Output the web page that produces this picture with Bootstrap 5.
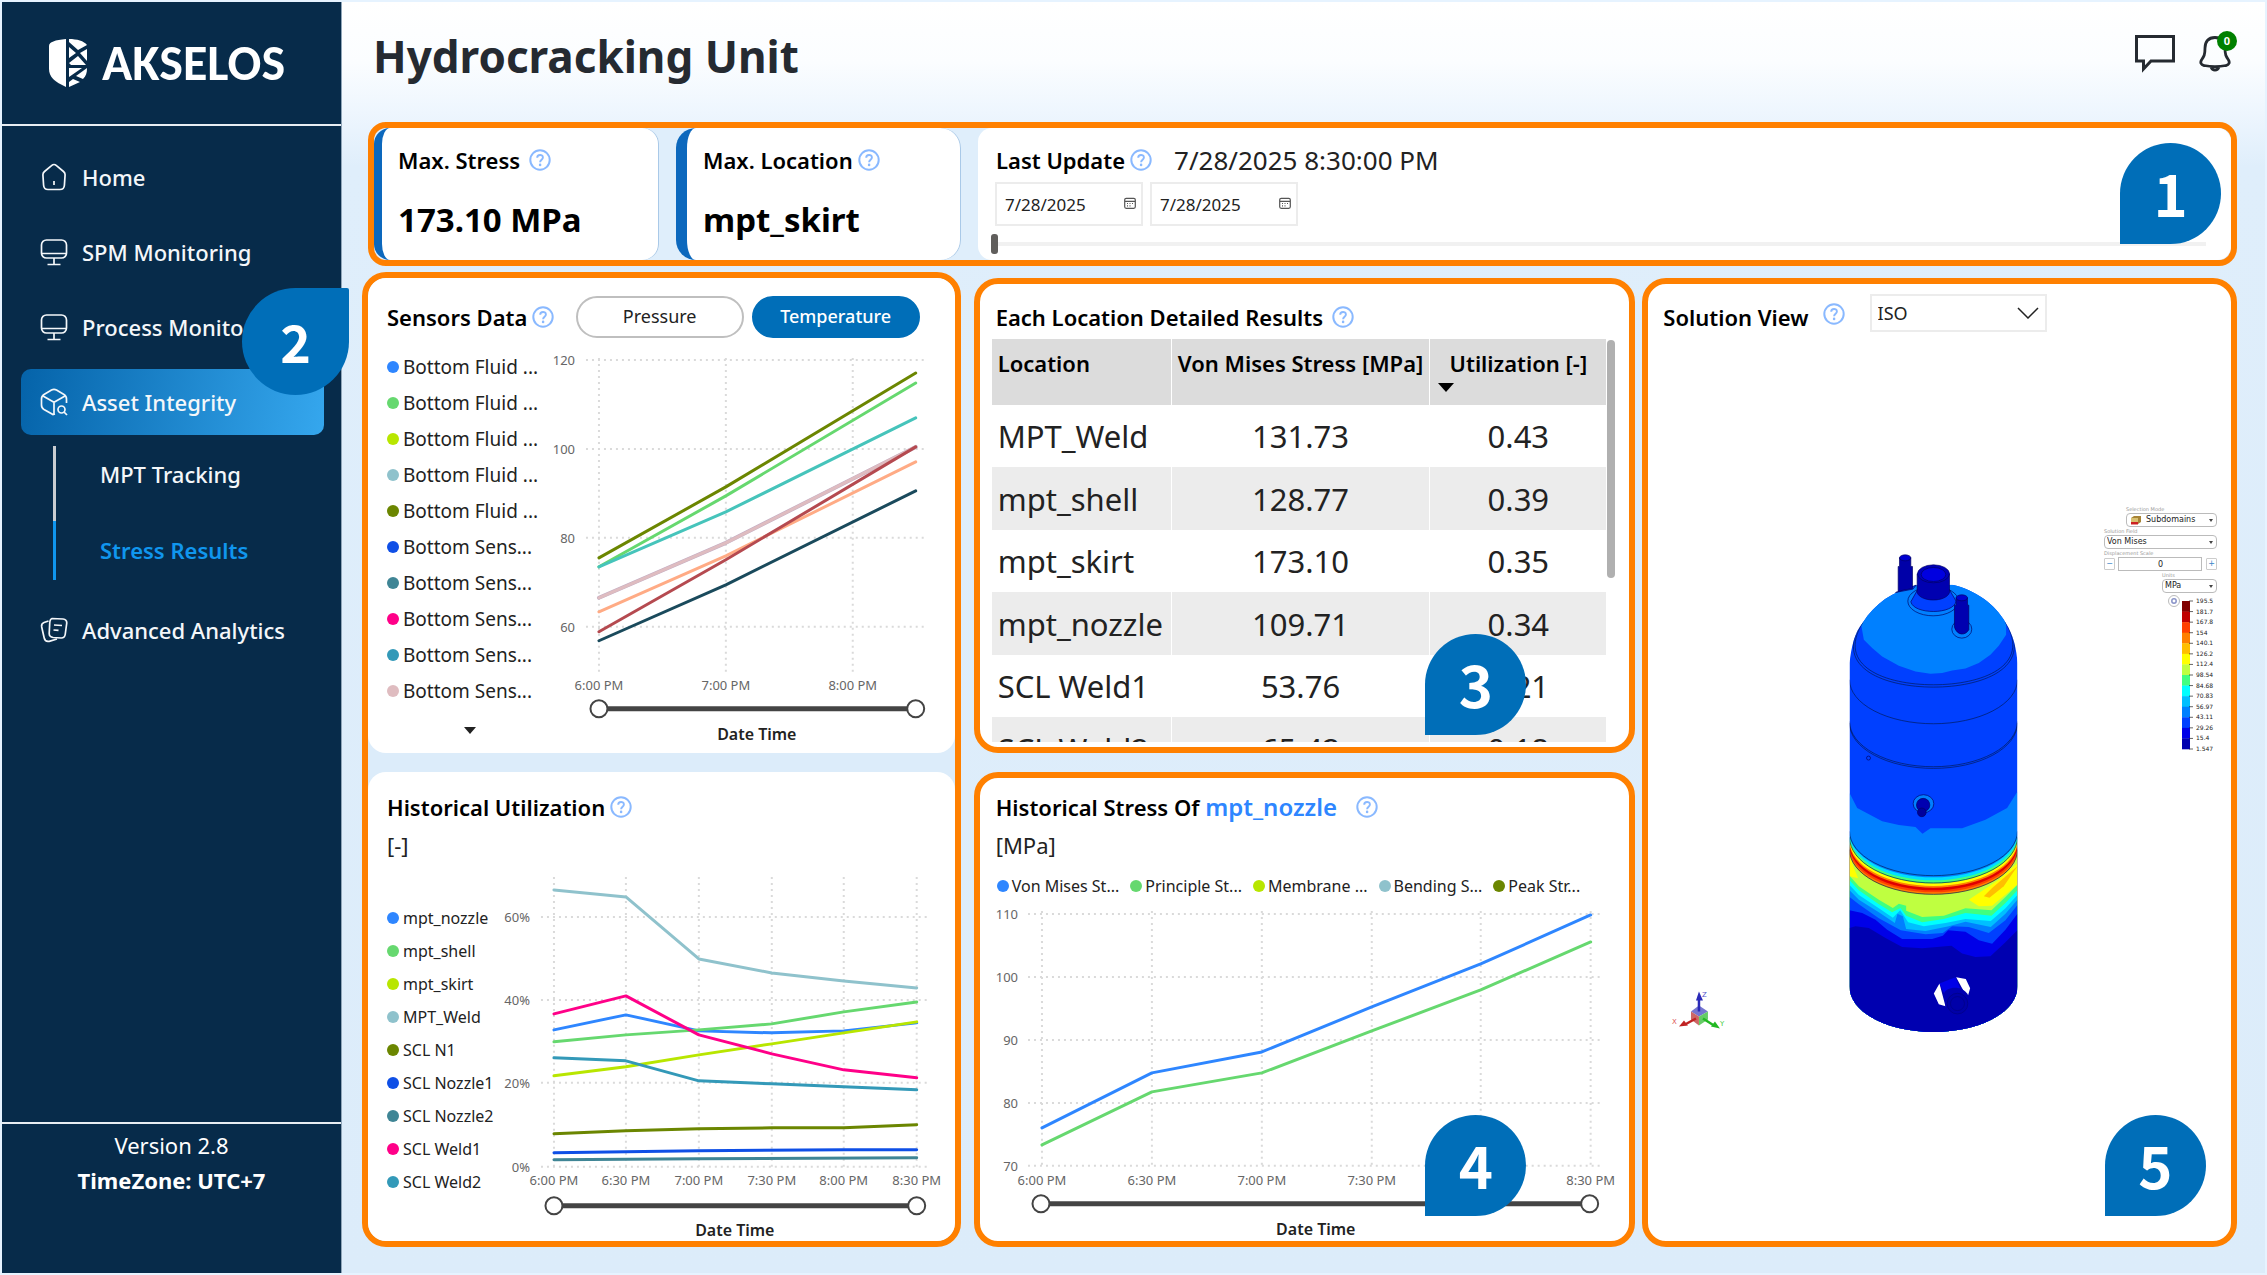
<!DOCTYPE html>
<html lang="en">
<head>
<meta charset="utf-8">
<meta name="viewport" content="width=device-width, initial-scale=1">
<title>Hydrocracking Unit - Stress Results</title>
<link href="https://cdn.jsdelivr.net/npm/bootstrap@5.3.0/dist/css/bootstrap.min.css" rel="stylesheet">
<style>
:root{--navy:#072b4a;--accent:#006eb8;--mark-orange:#ff8000;--sky:#2e86ff}
body{font-family:"Noto Sans",sans-serif;font-size:22px;line-height:30px;color:#222;background:#e6f3ff}
.app{padding:2px}
.side{width:340px;background:var(--navy);border-right:1px solid #8fa5b8}
.brand{height:122px;padding-left:47px;gap:15px;color:#fff;text-decoration:none}
.brand span{font:700 50px/50px Carlito,Lato,sans-serif}
.rule{height:2px;background:#e8edf2}
.menu{padding:18px 17px 0 19px;gap:9px}
.menu-link{height:66px;padding-left:19px;gap:14px;color:#f4f7fa;text-decoration:none;font-weight:500;border-radius:10px}
.menu-link svg,.head-icon{fill:none;stroke:currentColor}
.menu-link.current{background:linear-gradient(100deg,#0563a9,#35a7ee)}
.submenu{margin:2px 0 8px 32px}
.submenu a{display:block;height:59px;line-height:59px;padding-left:44px;border-left:3px solid #1096ee;color:#1096ee;font-weight:600;text-decoration:none}
.submenu a.plain{height:75px;line-height:56px;border-color:#c9cdd1;color:#f4f7fa;font-weight:500}
.side-foot{height:149px;padding-top:4px;line-height:35px;color:#fff}
.main{min-width:0;padding:0 28px 26px 20px;background:linear-gradient(#fff 0,#fbfdff 60px,#eef6fe 110px,#dfeefb 165px,#dcecfa 100%)}
.page-head{height:120px;padding:0 6px 12px 11px;color:#252a31}
.page-head h1{font-size:44px;line-height:56px;font-weight:700}
.head-btn{border:0;background:none;padding:0 0 4px;line-height:0;color:#252a31;position:relative}
.count-dot{position:absolute;top:-4px;right:-6px;width:20px;height:20px;border-radius:10px;background:#008000;color:#fff;font:700 11px/20px "Noto Sans",sans-serif;text-align:center}
.zone{position:relative;border:6px solid var(--mark-orange);border-radius:24px;background:#fff;min-width:0;min-height:0}
.zone-top{margin-left:6px;border-radius:18px;background:#dfeefb;gap:17px}
.kpi{width:285px;padding:17px 0 18px 16px;background:#fff;border:0 solid #0c68bd;border-left-width:8px;border-radius:16px;box-shadow:inset -1px 0 #a9c9e8;color:#000}
.kpi.wide-edge{border-left-width:11px;border-radius:20px}
.kpi-value{font-size:33px;line-height:44px;font-weight:700;margin-top:23px}
.update{min-width:0;padding:17px 0 6px 18px;background:#fff;border-radius:14px}
.ttl{font-size:22px;line-height:30px;font-weight:600;color:#000;margin:0;white-space:nowrap}
.stamp{font-size:26px;margin-left:21px}
.help{width:24px;height:24px;flex:none;color:#8ab9ff}
.dates{margin-top:7px}
.date-box{position:relative;width:148px;height:44px;margin-left:-1px;margin-right:8px}
.date-box input{width:100%;height:100%;border:2px solid #ececec;padding:0 0 0 8px;font-size:17px;color:#222}
.date-box svg{position:absolute;right:7px;top:15px}
.date-range{display:block;appearance:none;width:calc(100% - 20px);height:20px;margin:8px 0 0 -5px;background:linear-gradient(#f1f1f1,#f1f1f1) 7px 8px/100% 4px no-repeat}
.date-range::-webkit-slider-thumb{appearance:none;width:7px;height:20px;border-radius:3px;background:#605e5c}
.lower{display:grid;grid-template-columns:minmax(0,599fr) minmax(0,1264fr);column-gap:13px;min-height:0;padding-top:6px}
.col-a{overflow:hidden;background:#dcecfa;gap:19px}
.rest{display:grid;grid-template-columns:minmax(0,662fr) minmax(0,595fr);column-gap:7px;padding-top:6px;min-width:0}
.col-b{display:grid;grid-template-rows:1fr 1fr;row-gap:19px;min-width:0}
.pane{background:#fff;border-radius:18px}
.pane-sensor{flex:475 1 0}
.pane-util{flex:469 1 0;padding-top:20px}
.sensor-head{padding:18px 35px 0 19px}
.toggle{width:168px;height:42px;border-radius:21px;border:2px solid #bfbfbf;background:#fff;color:#222;font-size:18px;line-height:34px;padding:0 0 2px}
.toggle.on{background:var(--accent);border-color:var(--accent);color:#fff;font-weight:500}
.keys{list-style:none;margin:0;padding:0 0 0 19px;white-space:nowrap;flex:none}
.keys li{display:flex;align-items:center;gap:4px}
.keys i,.key-row i{width:12px;height:12px;border-radius:6px;flex:none}
.keys-sensor{width:177px;padding-top:11px;font-size:19px}
.keys-sensor li{height:36px}
.keys-util{width:132px;padding-top:42px;font-size:16px}
.keys-util li{height:33px}
.more{display:block;border:0;background:none;height:42px;width:150px;margin-left:27px;padding:0;line-height:0}
.key-row{font-size:16px;line-height:24px;padding-left:17px;margin-top:14px;gap:11px}
.key-row span{display:flex;align-items:center;gap:3px;white-space:nowrap}
.unit{padding-left:19px}
.results-head{padding:18px 0 0 16px}
.stress-head{padding:14px 0 0 16px;gap:18px}
.stress-name{font-size:24px;color:var(--sky)}
.view-head{padding:10px 0 0 15px;gap:13px}
.chart{display:block;min-width:0;width:100%;height:auto;font-size:13px;fill:#666}
.chart text{dominant-baseline:central}
.chart .end{text-anchor:end}
.chart .mid{text-anchor:middle}
.chart .axis-name{font-size:16px;font-weight:600;fill:#222;text-anchor:middle}
.chart .grid{stroke:#dadada;stroke-width:2;stroke-dasharray:2 4;fill:none}
.chart .series{fill:none;stroke-width:3;stroke-linejoin:round;stroke-linecap:round}
.chart .track{stroke:#444;stroke-width:5}
.chart .knob{fill:#fff;stroke:#444;stroke-width:2}
.results-wrap{min-height:0;margin:7px 14px 5px 12px;gap:1px}
.results-clip{overflow:hidden;flex:1 1 0;height:0;min-height:100%}
.results{width:100%;table-layout:fixed;border-collapse:collapse;color:#222;font-size:31px}
.results th{height:66px;background:#dcdcdc;color:#000;font-size:22px;line-height:28px;font-weight:600;text-align:center;vertical-align:top;padding:10px 0 0;white-space:nowrap;position:relative}
.results th:first-child,.results td:first-child{text-align:left;padding-left:6px}
.results td{height:62px;text-align:center;padding:0;line-height:40px;white-space:nowrap}
.results tbody tr:nth-child(even) td{background:#ececec;height:63px}
.results th+th,.results td+td{border-left:1px solid #fff}
.sort{position:absolute;left:7px;bottom:13px}
.scroll-thumb{width:8px;height:238px;margin-top:1px;border-radius:4px;background:#b0b0b0}
.pin{position:absolute;z-index:3;width:101px;height:101px;border-radius:51px 51px 51px 0;background:var(--accent);color:#fff;font:700 58px/98px "Noto Sans CJK SC",sans-serif;text-align:center}
.pin-1{right:10px;top:15px}
.pin-2{right:-8px;top:286px;width:107px;height:107px;border-radius:54px 2px 54px 54px;font-size:52px;line-height:105px}
.pin-3{right:103px;bottom:12px}
.pin-4{right:103px;bottom:25px}
.pin-5{right:25px;bottom:25px}
.view-select{width:177px;height:38px;margin-left:11px;border:2px solid #ececec;border-radius:0;padding:0 8px 0 6px;font-size:18px;line-height:24px;color:#222;background:#fff url("data:image/svg+xml,%3Csvg xmlns='http://www.w3.org/2000/svg' viewBox='0 0 22 12'%3E%3Cpath d='M1 1l10 10L21 1' fill='none' stroke='%23222' stroke-width='1.5'/%3E%3C/svg%3E") right 6px center/22px 12px no-repeat;appearance:none}
.viewer-panel{width:118px;flex:none;padding-top:173px;margin-right:14px;font:8px/8px "DejaVu Sans",sans-serif}
.viewer-panel label{display:block;font-size:5px;line-height:8px;color:#999}
.viewer-panel select,.viewer-panel input,.viewer-panel button{font:8px/10px "DejaVu Sans",sans-serif;color:#222;height:14px;border:1px solid #bbb;border-radius:4px;padding:0 2px;background-color:#fff}
.viewer-panel select{display:block;appearance:none;background:#fff url("data:image/svg+xml,%3Csvg xmlns='http://www.w3.org/2000/svg' viewBox='0 0 4 3'%3E%3Cpath d='M0 0h4L2 3z' fill='%23444'/%3E%3C/svg%3E") right 3px center/4px 3px no-repeat}
.viewer-panel input{border-radius:0;text-align:center;width:84px}
.viewer-panel button{width:11px;height:12px;border-radius:1px;border-color:#ccc;color:#3a86c8;padding:0}
.w-mode{width:91px}.w-units{width:55px}
.w-mode select{padding-left:19px}
.vp-row{width:113px}
</style>
</head>
<body>
<svg width="0" height="0" class="position-absolute" aria-hidden="true">
  <symbol id="help" viewBox="0 0 24 24"><circle cx="12" cy="12" r="9.7" fill="none" stroke="currentColor" stroke-width="2"/><path d="M9.2 9.7c0-3.600 5.700-3.500 5.700-.3 0 2.300-2.800 2.300-2.800 4.900" fill="none" stroke="currentColor" stroke-width="1.900"/><circle cx="12.100" cy="16.900" r="1.300" fill="currentColor"/></symbol>
  <symbol id="cal" viewBox="0 0 12 12"><rect x=".7" y="1.300" width="10.600" height="10" rx="1.500" fill="none" stroke="#555" stroke-width="1.200"/><path d="M1 4.300h10M3 6.500h1M5.500 6.500h1M8 6.500h1M3 8.800h1M5.500 8.800h1" stroke="#555" stroke-width="1.200"/></symbol>
  <symbol id="screen" viewBox="0 0 28 28"><rect x="1.500" y="2" width="25" height="18" rx="5"/><path d="M1.500 15.500h25M14 20v6M7.500 26.500h13"/></symbol>
</svg>

<div class="app d-flex min-vh-100">
  <aside class="side position-relative d-flex flex-column flex-shrink-0">
    <a href="#" class="brand d-flex align-items-center" aria-label="Akselos">
      <svg width="38" height="48" viewBox="0 0 38 48" aria-hidden="true">
        <path fill="#fff" d="M17 0v48C6 43 0 38 0 30V7C0 3 6 1 17 0z"/>
        <path fill="#fff" d="M20 0c8 0 15 2 18 6L29 11 20 3zM20 8l7 6-7 5zM38 10v12L31 14zM29 17l8 9-15 0-2-2zM20 29h13L20 38zM38 29c0 5-1 8-4 11L27 37zM24 40l7 3-11 5v-5z"/>
      </svg>
      <span>AKSELOS</span>
    </a>
    <div class="rule"></div>
    <nav class="menu d-flex flex-column">
      <a href="#" class="menu-link d-flex align-items-center"><svg width="28" height="28" viewBox="0 0 28 28" stroke-width="1.700"><path d="M14 1.500c1 0 1.700.5 2.500 1.200l7 5.800c1 .8 1.600 2 1.600 3.200l-.7 10.500c-.2 2.800-1.800 4.300-4.400 4.300H8c-2.600 0-4.200-1.500-4.400-4.300L2.900 11.700c0-1.200.6-2.400 1.600-3.200l7-5.800c.8-.7 1.500-1.200 2.500-1.200zM14 18v4"/></svg>Home</a>
      <a href="#" class="menu-link d-flex align-items-center"><svg width="28" height="28" stroke-width="1.700"><use href="#screen"/></svg>SPM Monitoring</a>
      <a href="#" class="menu-link d-flex align-items-center"><svg width="28" height="28" stroke-width="1.700"><use href="#screen"/></svg>Process Monitoring</a>
      <a href="#" class="menu-link current d-flex align-items-center"><svg width="28" height="28" viewBox="0 0 28 28" stroke-width="1.700"><path d="M15 26l-2 .5L4 21.500C2 20.300 1.500 19 1.500 17v-6c0-2 .5-3.300 2.500-4.500L11.500 2c1.700-.8 3.300-.8 5 0L24 6.500c2 1.200 2.500 2.500 2.500 4.500v4M3 8l11 6.300L25 8M14 14.300V26"/><circle cx="21.500" cy="21.500" r="3.500"/><path d="M24 24l3 3"/></svg>Asset Integrity</a>
      <div class="submenu"><a href="#" class="plain">MPT Tracking</a><a href="#">Stress Results</a></div>
      <a href="#" class="menu-link d-flex align-items-center"><svg width="28" height="28" viewBox="0 0 28 28" stroke-width="1.700"><path d="M12 2.500l11 .5c2.500.3 4 2 3.700 4.500l-1.500 11c-.3 2-1.800 3.500-4 3.500l-8-.5c-2.500-.3-4-1.800-4-4l.5-10c.1-2.800.6-4.500 2.300-5z"/><path d="M8.500 5L4 6.500c-2 .8-2.800 2-2.300 4.500l2.500 11c.6 2.600 2.400 3.800 5 3.300L17 23M14 9l8 .5M13.500 14l5 .4"/></svg>Advanced Analytics</a>
    </nav>
    <div class="mt-auto rule"></div>
    <div class="side-foot text-center"><div>Version 2.8</div><div class="fw-bold">TimeZone: UTC+7</div></div>
    <span class="pin pin-2">2</span>
  </aside>

  <main class="main flex-fill d-flex flex-column">
    <header class="page-head d-flex align-items-center">
      <h1 class="m-0 me-auto">Hydrocracking Unit</h1>
      <button class="head-btn me-4" aria-label="Comments"><svg class="head-icon" width="40" height="38" viewBox="0 0 40 38" stroke-width="3"><path d="M1.500 1.500h37V26H16l-7.500 8v-8h-7z"/></svg></button>
      <button class="head-btn" aria-label="Notifications"><svg class="head-icon" width="32" height="38" viewBox="0 0 32 38" stroke-width="2.800"><path d="M16 2.500C9 2.500 6 7 6 13c0 7-1 8.500-3.500 12C1 27.500 2 30 5 30.500c7 1.400 15 1.400 22 0 3-.5 4-3 2.500-5.500C27 21.500 26 20 26 13c0-6-3-10.500-10-10.500zM12 32c1.500 4 6.500 4 8 0"/></svg><span class="count-dot">0</span></button>
    </header>

    <section class="zone zone-top d-flex">
      <div class="kpi flex-shrink-0"><h2 class="ttl d-flex align-items-center gap-1">Max. Stress <svg class="help ms-1"><use href="#help"/></svg></h2><div class="kpi-value">173.10 MPa</div></div>
      <div class="kpi wide-edge flex-shrink-0"><h2 class="ttl d-flex align-items-center gap-1">Max. Location <svg class="help"><use href="#help"/></svg></h2><div class="kpi-value">mpt_skirt</div></div>
      <div class="update flex-fill">
        <div class="d-flex align-items-center"><h2 class="ttl">Last Update</h2><svg class="help ms-1"><use href="#help"/></svg><span class="stamp">7/28/2025 8:30:00 PM</span></div>
        <div class="dates d-flex">
          <div class="date-box"><input type="text" value="7/28/2025" aria-label="Start date"><svg width="12" height="12"><use href="#cal"/></svg></div>
          <div class="date-box"><input type="text" value="7/28/2025" aria-label="End date"><svg width="12" height="12"><use href="#cal"/></svg></div>
        </div>
        <input class="date-range" type="range" min="0" max="100" value="0" aria-label="Date range">
      </div>
      <span class="pin pin-1">1</span>
    </section>

    <div class="lower flex-fill">
      <section class="zone col-a d-flex flex-column">
        <div class="pane pane-sensor d-flex flex-column">
          <div class="sensor-head d-flex align-items-center">
            <h2 class="ttl">Sensors Data</h2><svg class="help ms-1 me-auto"><use href="#help"/></svg>
            <button class="toggle">Pressure</button><button class="toggle on ms-2">Temperature</button>
          </div>
          <div class="d-flex">
            <div class="flex-shrink-0">
              <ul class="keys keys-sensor">
                <li><i style="background:#2e86ff"></i>Bottom Fluid ...</li><li><i style="background:#66d86f"></i>Bottom Fluid ...</li><li><i style="background:#b8e600"></i>Bottom Fluid ...</li><li><i style="background:#8fc2cc"></i>Bottom Fluid ...</li><li><i style="background:#6b8600"></i>Bottom Fluid ...</li><li><i style="background:#0f4fe6"></i>Bottom Sens...</li><li><i style="background:#3f8595"></i>Bottom Sens...</li><li><i style="background:#ff0088"></i>Bottom Sens...</li><li><i style="background:#3399b8"></i>Bottom Sens...</li><li><i style="background:#dfbcc0"></i>Bottom Sens...</li>
              </ul>
              <button class="more" aria-label="More sensors"><svg width="12" height="7"><path d="M0 0h12L6 7z" fill="#222"/></svg></button>
            </div>
            <svg class="chart" viewBox="545 338 410 415" role="img" aria-label="Sensor temperature by time">
              <path class="grid" d="M586 360H926M586 449H926M586 538H926M586 627H926M599 358V672M726 358V672M853 358V672"/>
              <g class="end"><text x="575" y="360">120</text><text x="575" y="449">100</text><text x="575" y="538">80</text><text x="575" y="627">60</text></g>
              <g class="mid"><text x="599" y="685">6:00 PM</text><text x="726" y="685">7:00 PM</text><text x="853" y="685">8:00 PM</text></g>
              <g class="series"><path stroke="#66d86f" d="M599 567L726 496 916 383"/><path stroke="#6b8600" d="M599 558L726 487 916 373"/><path stroke="#46c4bb" d="M599 567L726 512 916 418"/><path stroke="#c3aec4" stroke-width="4" d="M599 598L726 543 916 447"/><path stroke="#dfbcc0" d="M599 598L726 543 916 447"/><path stroke="#ffab85" d="M599 612L726 556 916 462"/><path stroke="#b54a50" d="M599 632L726 560 916 447"/><path stroke="#1a4a5c" d="M599 641L726 585 916 491"/></g>
              <path class="track" d="M599 709H916"/><circle class="knob" cx="599" cy="709" r="8.500"/><circle class="knob" cx="916" cy="709" r="8.500"/>
              <text class="axis-name" x="757" y="734">Date Time</text>
            </svg>
          </div>
        </div>
        <div class="pane pane-util d-flex flex-column">
          <div class="d-flex align-items-center unit"><h2 class="ttl">Historical Utilization</h2><svg class="help ms-1"><use href="#help"/></svg></div>
          <div class="unit mt-2">[-]</div>
          <div class="d-flex">
            <ul class="keys keys-util">
              <li><i style="background:#2e86ff"></i>mpt_nozzle</li><li><i style="background:#66d86f"></i>mpt_shell</li><li><i style="background:#b8e600"></i>mpt_skirt</li><li><i style="background:#8fc2cc"></i>MPT_Weld</li><li><i style="background:#6b8600"></i>SCL N1</li><li><i style="background:#0f4fe6"></i>SCL Nozzle1</li><li><i style="background:#3f8595"></i>SCL Nozzle2</li><li><i style="background:#ff0088"></i>SCL Weld1</li><li><i style="background:#3399b8"></i>SCL Weld2</li>
            </ul>
            <svg class="chart" viewBox="500 860 455 381" role="img" aria-label="Utilization by time">
              <path class="grid" d="M541 917H927M541 1000H927M541 1083H927M541 1167H927M554 877V1167M626 877V1167M699 877V1167M772 877V1167M844 877V1167M917 877V1167"/>
              <g class="end"><text x="530" y="917">60%</text><text x="530" y="1000">40%</text><text x="530" y="1083">20%</text><text x="530" y="1167">0%</text></g>
              <g class="mid"><text x="554" y="1180">6:00 PM</text><text x="626" y="1180">6:30 PM</text><text x="699" y="1180">7:00 PM</text><text x="772" y="1180">7:30 PM</text><text x="844" y="1180">8:00 PM</text><text x="917" y="1180">8:30 PM</text></g>
              <g class="series"><path stroke="#2e86ff" d="M554 1030L626 1015 699 1031 772 1033 844 1031 917 1023"/><path stroke="#66d86f" d="M554 1042L626 1035 699 1030 772 1024 844 1012 917 1002"/><path stroke="#b8e600" d="M554 1076L626 1067 699 1055 772 1044 844 1033 917 1022"/><path stroke="#8fc2cc" d="M554 890L626 897 699 959 772 973 844 981 917 988"/><path stroke="#6b8600" d="M554 1134L626 1131 699 1129 772 1128 844 1128 917 1125"/><path stroke="#0f4fe6" d="M554 1153L626 1152 699 1151 844 1150 917 1150"/><path stroke="#3f8595" d="M554 1160L699 1159 917 1158"/><path stroke="#ff0088" d="M554 1014L626 996 699 1035 772 1054 844 1070 917 1078"/><path stroke="#3399b8" d="M554 1058L626 1061 699 1081 772 1084 844 1087 917 1090"/></g>
              <path class="track" d="M554 1206H917"/><circle class="knob" cx="554" cy="1206" r="8.500"/><circle class="knob" cx="917" cy="1206" r="8.500"/>
              <text class="axis-name" x="735" y="1230">Date Time</text>
            </svg>
          </div>
        </div>
      </section>

      <div class="rest">
        <div class="col-b">
          <section class="zone d-flex flex-column">
            <div class="d-flex align-items-center results-head"><h2 class="ttl">Each Location Detailed Results</h2><svg class="help ms-2"><use href="#help"/></svg></div>
            <div class="results-wrap d-flex flex-fill">
              <div class="results-clip">
                <table class="results">
                  <colgroup><col style="width:29.200%"><col style="width:42.100%"><col></colgroup>
                  <thead><tr><th scope="col">Location</th><th scope="col">Von Mises Stress [MPa]</th><th scope="col">Utilization [-]<svg class="sort" width="18" height="9"><path d="M1 0h16L9 9z"/></svg></th></tr></thead>
                  <tbody><tr><td>MPT_Weld</td><td>131.73</td><td>0.43</td></tr><tr><td>mpt_shell</td><td>128.77</td><td>0.39</td></tr><tr><td>mpt_skirt</td><td>173.10</td><td>0.35</td></tr><tr><td>mpt_nozzle</td><td>109.71</td><td>0.34</td></tr><tr><td>SCL Weld1</td><td>53.76</td><td>0.21</td></tr><tr><td>SCL Weld2</td><td>65.42</td><td>0.18</td></tr></tbody>
                </table>
              </div>
              <div class="scroll-thumb"></div>
            </div>
            <span class="pin pin-3">3</span>
          </section>
          <section class="zone d-flex flex-column">
            <div class="d-flex align-items-center stress-head"><h2 class="ttl">Historical Stress Of <span class="stress-name">mpt_nozzle</span></h2><svg class="help"><use href="#help"/></svg></div>
            <div class="ps-3 mt-2">[MPa]</div>
            <div class="key-row d-flex"><span><i style="background:#2e86ff"></i>Von Mises St...</span><span><i style="background:#66d86f"></i>Principle St...</span><span><i style="background:#b8e600"></i>Membrane ...</span><span><i style="background:#8fc2cc"></i>Bending S...</span><span><i style="background:#6b8600"></i>Peak Str...</span></div>
            <svg class="chart" viewBox="980 899 650 342" role="img" aria-label="Stress of mpt_nozzle by time">
              <path class="grid" d="M1028 915H1600M1028 978H1600M1028 1041H1600M1028 1104H1600M1028 1167H1600M1042 912V1167M1152 912V1167M1262 912V1167M1372 912V1167M1481 912V1167M1591 912V1167"/>
              <g class="end"><text x="1018" y="915">110</text><text x="1018" y="978">100</text><text x="1018" y="1041">90</text><text x="1018" y="1104">80</text><text x="1018" y="1167">70</text></g>
              <g class="mid"><text x="1042" y="1181">6:00 PM</text><text x="1152" y="1181">6:30 PM</text><text x="1262" y="1181">7:00 PM</text><text x="1372" y="1181">7:30 PM</text><text x="1591" y="1181">8:30 PM</text></g>
              <g class="series"><path stroke="#2e86ff" d="M1042 1129L1152 1074 1262 1053 1372 1008 1481 965 1591 916"/><path stroke="#66d86f" d="M1042 1146L1152 1093 1262 1074 1372 1032 1481 991 1591 943"/></g>
              <path class="track" d="M1041 1205H1590"/><circle class="knob" cx="1041" cy="1205" r="8.500"/><circle class="knob" cx="1590" cy="1205" r="8.500"/>
              <text class="axis-name" x="1316" y="1230">Date Time</text>
            </svg>
            <span class="pin pin-4">4</span>
          </section>
        </div>

        <section class="zone d-flex flex-column">
          <div class="d-flex align-items-start view-head"><label class="ttl mt-2" for="view">Solution View</label><svg class="help mt-2"><use href="#help"/></svg><select id="view" class="view-select"><option>ISO</option></select></div>
          <div class="d-flex flex-fill align-items-start">
            <svg class="chart" viewBox="1649 332 451 909" role="img" aria-label="Vessel stress contour">
              <defs><clipPath id="shell"><path d="M92 370C98 320 106 280 132 248C170 190 220 156 290 137L400 135C470 150 530 195 560 248C584 285 594 330 596 370V1340C596 1420 480 1477 344 1477S92 1420 92 1340z"/></clipPath></defs>
              <g transform="translate(1820 540) scale(.3334)">
                <g clip-path="url(#shell)">
                  <rect x="90" y="120" width="508" height="1360" fill="#0040ff"/>
                  <path fill="#0080ff" d="M200 100L127 255 135 300 160 325 190 350 240 378 290 395 335 402 370 400 400 392 440 386 480 370 515 345 540 318 562 285V240L440 100z"/>
                  <path fill="#0080ff" d="M92 760L115 805 190 845 240 856 290 862 311 882 335 866 430 866 500 840 565 805 596 755V1480H92z"/>
                  <path fill="#00dfff" d="M92 878A252 135 0 0 0 596 878V1480H92z"/>
                  <path fill="#40ff80" d="M92 885A252 137 0 0 0 596 885V1480H92z"/>
                  <path fill="#ffff00" d="M92 892A252 139 0 0 0 596 892V1480H92z"/>
                  <path fill="#ff8000" d="M92 902A252 137 0 0 0 596 902V1480H92z"/>
                  <path fill="#e00000" d="M92 908A252 136 0 0 0 596 908V1480H92z"/>
                  <path fill="#ff4000" d="M92 916A252 136 0 0 0 596 916V1480H92z"/>
                  <path fill="#ff8000" d="M92 924A252 134 0 0 0 596 924V1480H92z"/>
                  <path fill="#bfff40" d="M92 932A252 132 0 0 0 596 932V1480H92z"/>
                  <path fill="#ffff00" d="M92 945L105 985 118 1016 92 1010zM450 1080L540 1020 596 970V1035L520 1098 480 1100z"/>
                  <path fill="#ffbf00" d="M495 1070L520 1045 596 980 555 1040 512 1074z"/>
                  <path fill="#40ff80" d="M92 1008L120 1040 180 1080 222 1105 240 1092 262 1098 262 1113 310 1132 375 1128 440 1106 518 1112 560 1072 596 1035V1480H92z"/>
                  <path fill="#00ffff" d="M92 1022L120 1052 180 1094 220 1118 245 1105 262 1128 310 1148 375 1138 440 1120 518 1128 560 1090 596 1052V1480H92z"/>
                  <path fill="#00bfff" d="M92 1036L120 1066 180 1106 222 1134 244 1112 268 1148 315 1160 380 1150 440 1138 516 1144 560 1106 596 1066V1480H92z"/>
                  <path fill="#0080ff" d="M92 1052L120 1080 180 1118 228 1150 236 1122 252 1130 262 1168 320 1174 390 1160 440 1146 516 1162 560 1122 596 1080V1480H92z"/>
                  <path fill="#0040ff" d="M92 1072L120 1094 180 1136 246 1172 320 1184 372 1180 400 1160 450 1162 510 1180 560 1142 596 1096V1480H92z"/>
                  <path fill="#0000e8" d="M92 1112L130 1120 170 1140 205 1170 250 1198 340 1198 372 1188 388 1172 440 1176 480 1202 520 1212 560 1170 596 1122V1480H92z"/>
                  <path fill="#0000b0" d="M92 1165L110 1160 150 1165 200 1195 250 1222 310 1226 398 1218 430 1242 470 1252 515 1250 560 1208 596 1172V1480H92z"/>
                  <g fill="none" stroke="#001a55" stroke-width="2"><path d="M92 420A252 132 0 0 0 596 420M92 545A252 136 0 0 0 596 545M92 550A252 136 0 0 0 596 550M92 875A252 133 0 0 0 596 875M92 893A252 137 0 0 0 596 893M92 930A252 134 0 0 0 596 930M132 248C50 380 200 435 344 435S640 380 560 248M126 252C45 386 200 442 344 442S644 386 566 252"/></g>
                </g>
                <g stroke="#000060" stroke-width="2">
                  <ellipse cx="343" cy="184" rx="76" ry="44" fill="#0080ff"/><path d="M296 150L276 186C285 225 405 225 412 184L392 150z" fill="#0040ff"/>
                  <path d="M295 102V158C305 188 382 188 392 158V102z" fill="#0000b0"/><ellipse cx="344" cy="102" rx="48" ry="27" fill="#0000b8"/><ellipse cx="344" cy="104" rx="37" ry="21" fill="#0000e0"/>
                  <path d="M230 158L292 136 282 148z" fill="#0040ff"/><path d="M242 54V80H238V154L281 146V80H276V54z" fill="#0000a8"/><ellipse cx="259" cy="54" rx="17" ry="9" fill="#0000d0"/>
                  <ellipse cx="429" cy="268" rx="30" ry="27" fill="#0080ff"/><path d="M412 174V196H407V262C415 288 440 288 450 270V196H446V174z" fill="#0000b0"/><ellipse cx="429" cy="174" rx="17" ry="9" fill="#0000d0"/>
                  <ellipse cx="314" cy="792" rx="31" ry="27" fill="#0080ff"/><circle cx="313" cy="796" r="20" fill="#0000b0"/><circle cx="309" cy="818" r="13" fill="#00009c"/><circle cx="149" cy="655" r="6" fill="#0040ff"/>
                </g>
                <path fill="#fff" d="M345 1362L362 1332 380 1400 360 1394zM412 1313L441 1318 454 1346 446 1374 430 1346z"/>
                <path fill="#0000e8" d="M362 1332L410 1313 424 1346 376 1362z"/><path fill="#0000b0" d="M376 1362C380 1342 430 1334 448 1366V1400H380z"/>
                <circle cx="416" cy="1392" r="31" fill="#0000a8" stroke="#000080" stroke-width="2"/><circle cx="416" cy="1392" r="21" fill="none" stroke="#000080" stroke-width="2"/>
              </g>
              <g>
                <path fill="#7575d0" d="M1700 1006L1709 1012 1700 1017 1692 1012z"/><path fill="#c66" d="M1692 1012L1700 1017V1026L1692 1020z"/><path fill="#66cc66" d="M1700 1017L1709 1012V1020L1700 1026z"/>
                <path stroke="#2a2ab8" stroke-width="2.500" d="M1700 1012V998"/><path fill="#2a2ab8" d="M1700 992L1704 1001H1697z"/>
                <path stroke="#c02222" stroke-width="2.500" d="M1697 1019L1686 1025"/><path fill="#c02222" d="M1680 1027L1685 1021 1689 1026z"/>
                <path stroke="#22b822" stroke-width="2.500" d="M1704 1019L1715 1026"/><path fill="#22b822" d="M1721 1029L1716 1022 1712 1027z"/>
                <g font-size="7" font-family="DejaVu Sans"><text x="1673" y="1023" fill="#d55">X</text><text x="1721" y="1025" fill="#4c4">Y</text><text x="1703" y="996" fill="#55c">Z</text></g>
              </g>
            </svg>
            <div class="viewer-panel d-flex flex-column align-items-end">
              <div class="w-mode"><label for="mode">Selection Mode</label><div class="position-relative"><select id="mode" class="w-100"><option>Subdomains</option></select><svg class="position-absolute top-0 start-0 ms-1" width="11" height="14" viewBox="0 0 11 14"><path d="M1 5l3-2h7v6l-3 2H1z" fill="#a88436"/><path d="M1 5h7v4H1z" fill="#d8c070"/><path d="M1 9h7v2.500H1z" fill="#c22"/></svg></div></div>
              <div class="vp-row"><label for="field">Solution Field</label><select id="field" class="w-100"><option>Von Mises</option></select></div>
              <div class="vp-row"><label for="scale">Displacement Scale</label><div class="d-flex justify-content-between align-items-center"><button aria-label="Decrease">−</button><input id="scale" type="text" value="0"><button aria-label="Increase">+</button></div></div>
              <div class="w-units"><label for="units">Units</label><select id="units" class="w-100"><option>MPa</option></select></div>
              <svg width="55" height="160" viewBox="2163 593 55 160" font-size="6" fill="#222" role="img" aria-label="Stress scale in MPa">
                <circle cx="2175" cy="601" r="5.500" fill="#fff" stroke="#bbb"/><circle cx="2175" cy="601" r="2.200" fill="none" stroke="#8a94c8" stroke-width="1.500"/>
                <g id="bands"></g>
              </svg>
            </div>
          </div>
          <span class="pin pin-5">5</span>
        </section>
      </div>
    </div>
  </main>
</div>
<script src="https://cdn.jsdelivr.net/npm/bootstrap@5.3.0/dist/js/bootstrap.bundle.min.js"></script>
<script>
const levels=['195.5','181.7','167.8','154','140.1','126.2','112.4','98.54','84.68','70.83','56.97','43.11','29.26','15.4','1.547'];
const hues=['#800000','#c00000','#ff4000','#ff8000','#ffbf00','#ffff00','#bfff40','#40ff80','#00ffff','#00bfff','#0080ff','#0040ff','#0000e8','#0000b0'];
const step=148/14;
document.getElementById('bands').innerHTML=levels.map((v,i)=>{
  const y=601+i*step;
  return (hues[i]?`<rect x="2183" y="${y}" width="8" height="${step+.3}" fill="${hues[i]}"/>`:'')+`<path d="M2190 ${y}h4" stroke="#222" stroke-width=".7"/><text x="2197" y="${y+2}">${v}</text>`;
}).join('');
</script>
</body>
</html>
